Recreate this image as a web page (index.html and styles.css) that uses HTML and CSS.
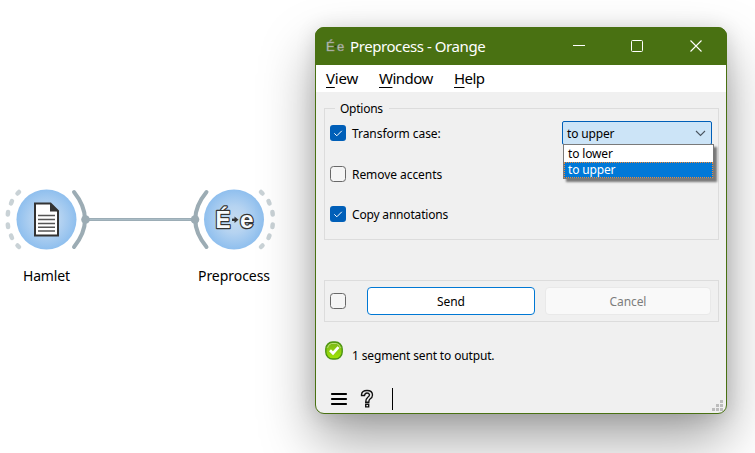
FILE: index.html
```html
<!DOCTYPE html>
<html lang="en">
<head>
<meta charset="utf-8">
<title>Preprocess - Orange</title>
<link rel="stylesheet" href="styles.css">
</head>
<body>
<svg class="canvas" width="755" height="453" viewBox="0 0 755 453">
  <defs>
    <radialGradient id="node"><stop offset="0" stop-color="#c4dbf0"/><stop offset=".45" stop-color="#b5d3f1"/><stop offset="1" stop-color="#8fbfee"/></radialGradient>
  </defs>
  <path d="M85 219.5H195" stroke="#9cadb6" stroke-width="3"/>
  <path d="M85 219.5H195" stroke="#a9bcc6" stroke-width="1"/>
  <g fill="none" stroke="#9cacb4" stroke-width="4" stroke-linecap="round">
    <path d="M74 192Q96 219.500 74 247"/>
    <path d="M206.500 192Q184 219.500 206.500 247"/>
  </g>
  <circle cx="85.500" cy="219.500" r="4.300" fill="#9cacb4"/>
  <circle cx="195" cy="219.500" r="4.300" fill="#9cacb4"/>
  <g stroke="#c9d2d6" stroke-width="4.500" stroke-linecap="round">
    <path d="M17.500 193.500l1.500-1.500M11 203.500l1-2.500M7.800 214.500l.3-2.500M7.800 224.500l.3 2.500M11 235.500l1 2.500M17.500 245.500l1.500 1.500"/>
    <path d="M262.500 193.500l-1.500-1.500M269.500 203.500l-1-2.500M272.700 214.500l-.3-2.500M272.700 224.500l-.3 2.500M269.500 235.500l-1 2.500M262.500 245.500l-1.500 1.500"/>
  </g>
  <circle cx="46.500" cy="219.500" r="30" fill="url(#node)"/>
  <circle cx="234" cy="219.500" r="30" fill="url(#node)"/>
  <path d="M35 203.500h15.500l7.500 7.500v24.500H35z" fill="#fff" stroke="#333" stroke-width="2"/>
  <path d="M50 203l8.500 8.500H50z" fill="#333"/>
  <path d="M38 215.500h17M38 219.500h17M38 223.500h17M38 227.200h17M38 231h17" stroke="#555" stroke-width="1.500"/>
  <g class="case-icon"><text x="215.500" y="228" textLength="15" lengthAdjust="spacingAndGlyphs">É</text><text x="240" y="228" textLength="13.500" lengthAdjust="spacingAndGlyphs">e</text></g>
  <path d="M232 219.800h3" stroke="#333" stroke-width="2.400"/><path d="M234.500 216.500l4 3.300-4 3.300z" fill="#333"/>
  <text class="node-label" x="23" y="281" textLength="47">Hamlet</text>
  <text class="node-label" x="198" y="281" textLength="72">Preprocess</text>
</svg>

<main class="window">
  <header class="titlebar">
    <svg class="app-icon" width="19" height="16" viewBox="0 0 19 16"><text x="0" y="12.500">É</text><text x="11" y="12.500">e</text><path d="M8.500 8.500h2" stroke="#2f3b18" stroke-width="1.500"/></svg>
    <h1>Preprocess - Orange</h1>
    <svg class="controls" width="130" height="14" viewBox="0 0 130 14"><path d="M0 6.500h12" stroke="#fff"/><rect x="58.500" y="1.500" width="11" height="11" rx="1" fill="none" stroke="#fff"/><path d="M117.500 1.500l11 11M128.500 1.500l-11 11" stroke="#fff" stroke-width="1.100"/></svg>
  </header>
  <nav class="menubar"><span class="m-view"><u>V</u>iew</span><span class="m-window"><u>W</u>indow</span><span class="m-help"><u>H</u>elp</span></nav>
  <div class="content">
    <fieldset class="options">
      <legend>Options</legend>
      <div class="row"><svg class="check" viewBox="0 0 16 16"><rect width="16" height="16" rx="3" fill="#005fb8"/><path d="M4.300 8.300l2.500 2.500 5-5" fill="none" stroke="#fff"/></svg><label class="t-case">Transform case:</label>
        <div class="combo"><span>to upper</span><svg width="11" height="7" viewBox="0 0 11 7"><path d="M1 1l4.500 4.500L10 1" fill="none" stroke="#4b5560" stroke-width="1.100"/></svg>
          <div class="list"><div>to lower</div><div class="selected">to upper</div></div>
        </div>
      </div>
      <div class="row accents"><svg class="check" viewBox="0 0 16 16"><rect x=".5" y=".5" width="15" height="15" rx="3" fill="#f5f5f5" stroke="#686868"/></svg><label class="t-accents">Remove accents</label></div>
      <div class="row annotations"><svg class="check" viewBox="0 0 16 16"><rect width="16" height="16" rx="3" fill="#005fb8"/><path d="M4.300 8.300l2.500 2.500 5-5" fill="none" stroke="#fff"/></svg><label class="t-annot">Copy annotations</label></div>
    </fieldset>
    <div class="actions">
      <svg class="check" viewBox="0 0 16 16"><rect x=".5" y=".5" width="15" height="15" rx="3" fill="#f5f5f5" stroke="#686868"/></svg>
      <button class="send">Send</button><button class="cancel" disabled>Cancel</button>
    </div>
    <div class="status">
      <svg width="18" height="19" viewBox="0 0 18 19"><defs><linearGradient id="ok" x2="0" y2="1"><stop stop-color="#79b51a"/><stop offset="1" stop-color="#a1e506"/></linearGradient></defs><rect x=".8" y="1" width="16.400" height="17" rx="7" fill="url(#ok)" stroke="#4c9412" stroke-width="1.400"/><path d="M2.500 7q1-4 4-4.500h5q3 .5 4 4.500" fill="none" stroke="#b6dc72"/><path d="M5 9.200l3 3 5.500-6" fill="none" stroke="#fff" stroke-width="2.700"/></svg>
      <span>1 segment sent to output.</span>
    </div>
    <footer class="statusbar">
      <svg width="64" height="24" viewBox="0 0 64 24"><path d="M2 7h14M2 12h14M2 17h14" stroke="#000" stroke-width="2.200" stroke-linecap="round"/><path transform="translate(.5 0)" d="M31 8.500V7.500Q31.500 3.500 36.500 3.500Q42 3.500 42 8Q42 10.500 39.500 12Q38.300 13 38.300 15.200H35.200Q35 12 37.300 10.200Q39 9 39 7.800Q38.500 6 36.500 6Q34.500 6 34 8.500ZM35.200 17.200h3v2.700h-3z" fill="#f0f0f0" stroke="#111" stroke-width="1.350"/><path d="M62.500 1v22" stroke="#000"/></svg>
      <svg class="grip" width="11" height="11" viewBox="0 0 11 11" fill="#bdbdbd"><path d="M8 0h3v3H8zM4 4h3v3H4zM8 4h3v3H8zM0 8h3v3H0zM4 8h3v3H4zM8 8h3v3H8z"/></svg>
    </footer>
  </div>
</main>
</body>
</html>
```
FILE: styles.css
```css
* { box-sizing: border-box; }
body { margin: 0; width: 755px; height: 453px; overflow: hidden; position: relative; background: #fff; color: #000; font: 12px/16px "Noto Sans", sans-serif; }
svg { display: block; flex: none; }
.canvas { position: absolute; left: 0; top: 0; }
.node-label { font: 14px "Noto Sans", sans-serif; }
.case-icon { font: 24px "Liberation Sans", sans-serif; fill: #f8fafc; stroke: #333; stroke-width: 3.600px; stroke-linejoin: round; paint-order: stroke; }
.case-icon text { stroke-width: 2.400px; font-weight: 700; }
.window { position: absolute; left: 315px; top: 27px; width: 412px; height: 387px; border: 1px solid #497112; border-radius: 9px; background: #f0f0f0; box-shadow: 0 2px 20px rgba(0,0,0,.13), 0 26px 54px rgba(0,0,0,.36); }
.titlebar { height: 38px; margin: -1px -1px 0; border-radius: 9px 9px 0 0; background: #497112; display: flex; align-items: center; padding: 0 24px 0 11px; color: #fff; }
.app-icon text { font: 13px "Liberation Sans", sans-serif; fill: #d4d9cd; stroke: #8b9182; stroke-width: .5px; }
h1 { margin: 0 0 0 5px; font: 15px/20px "Noto Sans", sans-serif; letter-spacing: -.42px; white-space: nowrap; }
.controls { margin-left: auto; }
.menubar { height: 27px; background: #fff; display: flex; align-items: center; gap: 21px; padding: 0 0 2px 10px; font-size: 15px; line-height: 20px; }
.menubar span { white-space: nowrap; }
.menubar u { text-underline-offset: 3px; text-decoration-thickness: 1px; }
.m-view { width: 32px; letter-spacing: -.2px; }
.m-window { width: 54px; letter-spacing: -.5px; }
.m-help { letter-spacing: -.6px; }
.content { padding: 8px 7px 0 8px; }
.options { margin: 0; padding: 4px 6px 0 5px; border: 1px solid #dcdcdc; height: 140px; min-width: 0; }
.options legend { margin-left: 5px; padding: 0 6px 0 5px; height: 17px; line-height: 17px; letter-spacing: -.25px; }
.row { display: flex; align-items: center; height: 24px; gap: 6px; white-space: nowrap; }
.row label { padding-top: 2px; }
.t-case, .t-accents { letter-spacing: -.06px; }
.t-annot { letter-spacing: -.18px; }
.check { width: 16px; height: 16px; }
.accents { margin-top: 17px; }
.annotations { margin-top: 16px; }
.combo { position: relative; margin-left: auto; width: 150px; height: 24px; border: 1px solid #005fb8; border-radius: 2px; background: #cce4f7; display: flex; align-items: center; justify-content: space-between; padding: 0 5px 0 4px; letter-spacing: -.15px; }
.combo > span { padding-top: 2px; }
.list { position: absolute; left: 0; top: 22px; width: 151px; height: 35px; border: 1px solid #7a7a7a; background: #fff; box-shadow: 3px 3px 2px rgba(0,0,0,.5); }
.list div { height: 17px; line-height: 17px; padding-left: 4px; }
.list .selected { height: 16px; line-height: 15px; background: #0078d7; color: #fff; outline: 1px dotted #f58a33; outline-offset: -1px; }
.actions { margin-top: 40px; height: 42px; border: 1px solid #dcdcdc; display: flex; align-items: center; padding: 0 7px 0 5px; }
button { font: 12px/16px "Noto Sans", sans-serif; padding: 1px 0 0; border-radius: 4px; height: 28px; letter-spacing: -.1px; }
.send { margin-left: 21px; width: 168px; background: #fff; border: 1px solid #0078d4; color: #000; }
.cancel { margin-left: 10px; width: 166px; background: #f9f9f9; border: 1px solid #e9e9e9; color: #7d7d7d; }
.status { display: flex; margin-top: 19px; padding-left: 1px; gap: 9px; }
.status span { padding-top: 7px; white-space: nowrap; letter-spacing: -.15px; }
.statusbar { display: flex; justify-content: space-between; padding: 0 0 0 6px; margin-top: 23px; }
.grip { margin-top: 13px; margin-right: -4px; }
```
